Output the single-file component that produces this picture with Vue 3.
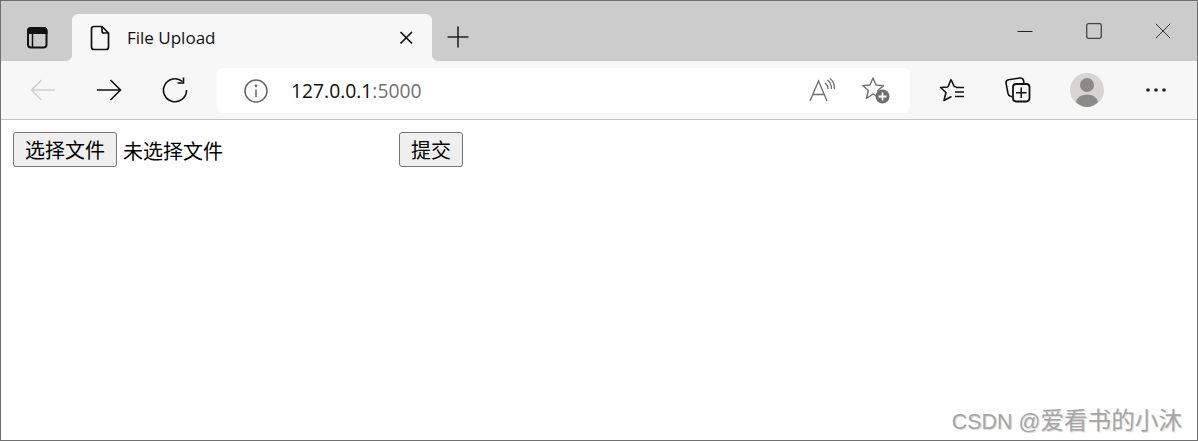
<template>
  <div class="window">
    <header class="tabstrip">
      <button class="strip-icon" aria-label="Tab actions">
        <svg width="24" height="24" viewBox="0 0 24 24" fill="none" stroke="#111" stroke-width="2">
          <rect x="3" y="3" width="18.5" height="19.5" rx="3" />
          <path d="M3 6.5 Q3 3 6 3 H18.5 Q21.5 3 21.5 6.5 V8 H3 Z" fill="#111" />
          <path d="M7.5 8 V22.5" stroke-width="1.5" />
        </svg>
      </button>
      <div class="tab">
        <svg class="page-icon" width="20" height="26" viewBox="0 0 20 26" fill="none" stroke="#111" stroke-width="1.7">
          <path d="M4 1.5 H12 L18.5 8 V22 Q18.5 24.5 16 24.5 H4 Q1.5 24.5 1.5 22 V4 Q1.5 1.5 4 1.5 Z" />
          <path d="M12 1.5 V6 Q12 8 14 8 H18.5" />
        </svg>
        <span class="tab-title">File Upload</span>
        <svg class="tab-close" width="14" height="14" viewBox="0 0 14 14" stroke="#111" stroke-width="1.7">
          <path d="M1.5 1 L13 12.5 M13 1 L1.5 12.5" />
        </svg>
      </div>
      <svg class="new-tab" width="22" height="22" viewBox="0 0 22 22" stroke="#222" stroke-width="1.6">
        <path d="M11 0.5 V21.5 M0.5 11 H21.5" />
      </svg>
      <div class="window-controls">
        <svg width="16" height="16" viewBox="0 0 16 16" stroke="#222" stroke-width="1">
          <path d="M0.5 8.5 H15.5" />
        </svg>
        <svg width="16" height="16" viewBox="0 0 16 16" fill="none" stroke="#444" stroke-width="1.3">
          <rect x="0.7" y="0.7" width="14.6" height="14.6" rx="1.8" />
        </svg>
        <svg width="16" height="16" viewBox="0 0 16 16" stroke="#333" stroke-width="1">
          <path d="M0.8 0.8 L15.2 15.2 M15.2 0.8 L0.8 15.2" />
        </svg>
      </div>
    </header>

    <nav class="toolbar">
      <div class="nav-buttons">
        <svg width="26" height="22" viewBox="0 0 26 22" fill="none" stroke="#d0d0d0" stroke-width="1.6">
          <path d="M25 11 H1.5 M11.5 1 L1.5 11 L11.5 21" />
        </svg>
        <svg width="26" height="22" viewBox="0 0 26 22" fill="none" stroke="#111" stroke-width="1.6">
          <path d="M1 11 H24.5 M14.5 1 L24.5 11 L14.5 21" />
        </svg>
        <svg width="26" height="26" viewBox="0 0 26 26" fill="none" stroke="#111" stroke-width="1.6">
          <path d="M20.5 4.5 A11.5 11.5 0 1 0 24.5 13" />
          <path d="M21.5 0.5 V6 H15.5" />
        </svg>
      </div>
      <div class="address">
        <svg class="info" width="24" height="24" viewBox="0 0 24 24" fill="none" stroke="#666" stroke-width="1.5">
          <circle cx="12" cy="12" r="11" />
          <path d="M12 10.5 V18" />
          <circle cx="12" cy="6.8" r="0.6" />
        </svg>
        <span class="url">127.0.0.1<span class="port">:5000</span></span>
        <div class="address-actions">
          <svg width="26" height="24" viewBox="0 0 26 24" fill="none" stroke="#6e6e6e" stroke-width="1.3">
            <path d="M1 23 L9.5 3 L18 23 M4 16.5 H15" />
            <path d="M16 5 Q19 7 19 11 M18.5 2 Q22.5 5 22.5 11 M21 0.5 Q25.5 4 25.5 11" />
          </svg>
          <svg width="28" height="28" viewBox="0 0 28 28" fill="none">
            <path d="M11 2 L14 9 L21.5 9.6 L15.8 14.5 L17.5 21.5 L11 18 L4.5 22.5 L6.3 14.5 L0.8 9.6 L8 9 Z" stroke="#6e6e6e" stroke-width="1.4" stroke-linejoin="round" />
            <circle cx="20.5" cy="20.5" r="7" fill="#6e6e6e" />
            <path d="M20.5 16.5 V24.5 M16.5 20.5 H24.5" stroke="#fff" stroke-width="1.8" />
          </svg>
        </div>
      </div>
      <div class="tools">
        <svg width="26" height="24" viewBox="0 0 26 24" fill="none" stroke="#111" stroke-width="1.6">
          <path d="M12 1.5 L15.2 8.5 L17.5 9 M9 9 L1.5 9.5 L7 14.5 L5 22.5 L12.5 18.5 M12 1.5 L9 9" stroke-linejoin="round" />
          <path d="M17 9.5 H25 M16 14 H25 M16 18.5 H25" />
        </svg>
        <svg width="26" height="26" viewBox="0 0 26 26" fill="none" stroke="#111" stroke-width="1.6">
          <path d="M7 19.5 H6 Q3.5 19 3 16.5 L1 6 Q0.8 3.3 3.5 2.8 L15 1 Q18 0.8 18.5 3.5 L19 6" />
          <rect x="8" y="7" width="16.5" height="17.5" rx="3.2" stroke-width="1.8" />
          <path d="M16.2 10.5 V21 M11 15.8 H21.5" stroke-width="1.5" />
        </svg>
        <div class="avatar">
          <svg width="34" height="34" viewBox="0 0 34 34">
            <circle cx="17" cy="17" r="17" fill="#d6d5d2" />
            <circle cx="17" cy="12" r="7" fill="#8b8a87" />
            <path d="M6 29 Q8 21.5 17 21.5 Q26 21.5 28 29 Q23 34 17 34 Q11 34 6 29 Z" fill="#8b8a87" />
          </svg>
        </div>
        <svg width="20" height="6" viewBox="0 0 20 6" fill="#222">
          <circle cx="2" cy="3" r="1.8" />
          <circle cx="10" cy="3" r="1.8" />
          <circle cx="18" cy="3" r="1.8" />
        </svg>
      </div>
    </nav>

    <main class="page">
      <button class="native-btn">选择文件</button>
      <span class="file-status">未选择文件</span>
      <button class="native-btn">提交</button>
      <div class="watermark"><span class="wm-latin">CSDN @</span>爱看书的小沐</div>
    </main>
  </div>
</template>

<script setup>
</script>

<style>
html, body { margin: 0; padding: 0; background: #fff; }
</style>

<style scoped>
.window {
  box-sizing: border-box;
  width: 1198px;
  height: 441px;
  border: 1px solid #6f6f6f;
  display: flex;
  flex-direction: column;
  overflow: hidden;
  font-family: "Open Sans", "Noto Sans", "Noto Sans CJK SC", sans-serif;
  color: #111;
}
.tabstrip {
  height: 60px;
  flex: none;
  background: #cccccc;
  display: flex;
  align-items: flex-end;
  position: relative;
}
.strip-icon {
  width: 71px;
  height: 47px;
  border: 0;
  padding: 0 0 2px 0;
  background: transparent;
  display: flex;
  align-items: center;
  justify-content: center;
  box-sizing: border-box;
}
.tab {
  width: 360px;
  height: 47px;
  background: #f7f7f7;
  border-radius: 6px 6px 0 0;
  display: flex;
  align-items: center;
  box-sizing: border-box;
  padding: 0 19px 0 18px;
  position: relative;
}
.tab::before,
.tab::after {
  content: "";
  position: absolute;
  bottom: 0;
  width: 6px;
  height: 6px;
}
.tab::before {
  left: -6px;
  background: radial-gradient(circle at 0 0, #cccccc 5.5px, #f7f7f7 6.5px);
}
.tab::after {
  right: -6px;
  background: radial-gradient(circle at 100% 0, #cccccc 5.5px, #f7f7f7 6.5px);
}
.page-icon { flex: none; }
.tab-title {
  margin-left: 17px;
  font-size: 17px;
  color: #111;
  flex: 1;
}
.new-tab { align-self: flex-end; margin: 0 0 13px 15px; }
.window-controls {
  margin-left: auto;
  align-self: flex-start;
  display: flex;
  gap: 53px;
  padding: 22px 26px 0 0;
}
.toolbar {
  height: 59px;
  flex: none;
  box-sizing: border-box;
  background: #f7f7f7;
  border-bottom: 1px solid #c4c4c4;
  display: flex;
  align-items: center;
  padding: 1px 0 0 29px;
}
.nav-buttons {
  display: flex;
  align-items: center;
  gap: 40px;
  width: 187px;
  margin-bottom: 2px;
}
.address {
  width: 693px;
  height: 45px;
  background: #fff;
  border-radius: 6px;
  display: flex;
  align-items: center;
  box-sizing: border-box;
  padding: 0 20px 0 27px;
}
.url {
  margin-left: 23px;
  font-size: 19.3px;
  color: #111;
}
.port { color: #737373; }
.address-actions {
  margin-left: auto;
  display: flex;
  align-items: center;
  gap: 27px;
  margin-bottom: 2px;
}
.tools {
  display: flex;
  align-items: center;
  margin-left: 29px;
  gap: 40px;
  margin-bottom: 2px;
}
.avatar { display: flex; margin-left: -1px; margin-right: 2px; }
.page {
  flex: 1;
  position: relative;
  background: #fff;
  display: flex;
  align-items: flex-start;
  padding: 12px 0 0 12px;
  font-size: 20px;
  font-family: "Noto Sans CJK SC", sans-serif;
}
.native-btn {
  box-sizing: border-box;
  height: 35px;
  padding: 0 11px;
  font: inherit;
  line-height: 1;
  color: #000;
  background: #efefef;
  border: 1px solid #767676;
  border-radius: 3px;
}
.file-status {
  width: 282px;
  box-sizing: border-box;
  padding-left: 6px;
  line-height: 38px;
  color: #000;
}
.watermark {
  position: absolute;
  right: 15px;
  bottom: 4px;
  font-family: "Liberation Sans", "Noto Sans CJK SC", sans-serif;
  font-size: 23.6px;
  color: #a6a6a6;
  text-shadow: 1px 1px 1px #d8d8d8;
  white-space: nowrap;
}
.wm-latin { font-size: 21.5px; }
</style>
